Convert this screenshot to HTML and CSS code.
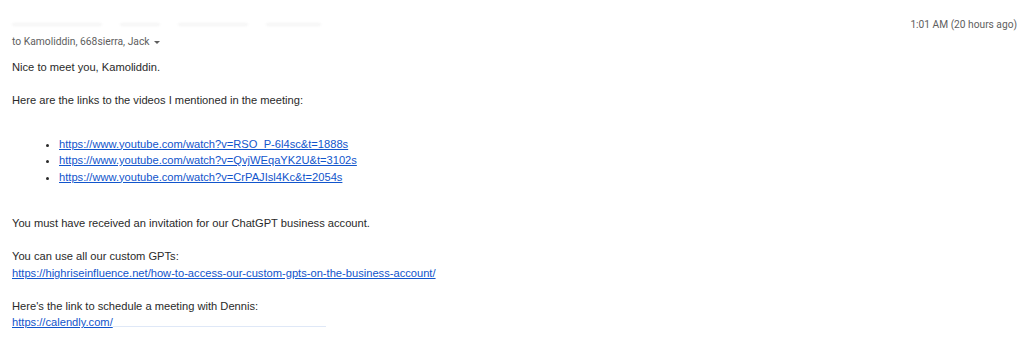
FILE: index.html
```html
<!DOCTYPE html>
<html lang="en">
<head>
    <meta charset="UTF-8">
    <title>Message</title>
    <link rel="stylesheet" href="styles.css">
</head>
<body>
    <div class="message">
        <div class="message-head">
            <div class="sender">
                <!-- sender line is blurred out in the original -->
                <div class="sender-smudge">
                    <span class="smudge" style="width: 90px"></span>
                    <span class="smudge" style="width: 40px"></span>
                    <span class="smudge" style="width: 70px"></span>
                    <span class="smudge" style="width: 55px"></span>
                </div>
                <div class="recipients">to Kamoliddin, 668sierra, Jack <span class="caret"></span></div>
            </div>
            <div class="time">1:01 AM (20 hours ago)</div>
        </div>

        <div class="message-body">
            <p>Nice to meet you, Kamoliddin.</p>
            <p>Here are the links to the videos I mentioned in the meeting:</p>
            <ul class="links">
                <li><a href="#">https://www.youtube.com/watch?v=RSO_P-6l4sc&amp;t=1888s</a></li>
                <li><a href="#">https://www.youtube.com/watch?v=QvjWEqaYK2U&amp;t=3102s</a></li>
                <li><a href="#">https://www.youtube.com/watch?v=CrPAJIsl4Kc&amp;t=2054s</a></li>
            </ul>
            <p>You must have received an invitation for our ChatGPT business account.</p>
            <p>You can use all our custom GPTs:<br>
                <a href="#">https://highriseinfluence.net/how-to-access-our-custom-gpts-on-the-business-account/</a></p>
            <p>Here's the link to schedule a meeting with Dennis:<br>
                <a href="#">https://calendly.com/</a><span class="hidden-link"></span></p>
        </div>
        <div class="more"></div>
    </div>
</body>
</html>
```

FILE: styles.css
```css
body {
    margin: 0;
    background: #fff;
    font-family: "Liberation Sans", Arial, sans-serif;
}

.message {
    padding: 0 7px 0 12px;
}

.message-head {
    display: flex;
    justify-content: space-between;
    align-items: flex-start;
    padding-top: 17px;
}

.sender-smudge {
    display: flex;
    gap: 18px;
    height: 14px;
    align-items: center;
    opacity: 0.35;
}

.smudge {
    display: inline-block;
    height: 3px;
    background: #e4e4e4;
    border-radius: 2px;
    filter: blur(1px);
}

.recipients {
    font-family: Roboto, "Liberation Sans", sans-serif;
    font-size: 10.3px;
    color: #5e5e5e;
    line-height: 16px;
    margin-top: 3px;
}

.caret {
    display: inline-block;
    width: 0;
    height: 0;
    margin-left: 2px;
    vertical-align: middle;
    border-left: 3.5px solid transparent;
    border-right: 3.5px solid transparent;
    border-top: 3.5px solid #5e5e5e;
}

.time {
    font-family: Roboto, "Liberation Sans", sans-serif;
    font-size: 10.2px;
    color: #5e5e5e;
    line-height: 16px;
}

.message-body {
    margin-top: 9px;
    font-size: 11.15px;
    line-height: 16.5px;
    color: #2a2a2a;
}

.message-body p {
    margin: 0 0 16.5px 0;
}

.message-body a {
    color: #15c;
}

.links {
    margin: 27px 0 30px 0;
    padding-left: 47px;
}

.hidden-link {
    display: inline-block;
    width: 213px;
    height: 11px;
    vertical-align: -1px;
    border-bottom: 1px solid #dfe8f7;
}

.more {
    width: 18px;
    height: 4px;
    margin-top: 0;
    background: #f1f1f1;
    border-radius: 2px 2px 0 0;
}
```
